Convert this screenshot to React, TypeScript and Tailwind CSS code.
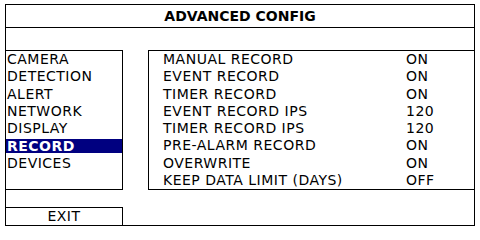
import React from 'react';

const menu = ['CAMERA', 'DETECTION', 'ALERT', 'NETWORK', 'DISPLAY', 'RECORD', 'DEVICES'];

const settings: [string, string][] = [
  ['MANUAL RECORD', 'ON'],
  ['EVENT RECORD', 'ON'],
  ['TIMER RECORD', 'ON'],
  ['EVENT RECORD IPS', '120'],
  ['TIMER RECORD IPS', '120'],
  ['PRE-ALARM RECORD', 'ON'],
  ['OVERWRITE', 'ON'],
  ['KEEP DATA LIMIT (DAYS)', 'OFF'],
];

export default function App() {
  return (
    <div className="w-[480px] h-[230px] bg-white pt-[4px] pl-[5px] text-black font-['DejaVu_Sans','Verdana',sans-serif]">
      <div className="w-[470px] h-[222px] border border-black flex flex-col">
        {/* Title */}
        <div className="h-[23px] border-b border-black flex items-center justify-center text-[14px] font-bold">
          ADVANCED CONFIG
        </div>
        <div className="h-[22px]" />

        {/* Menu + settings */}
        <div className="h-[140px] flex">
          <div className="w-[117px] border-t border-r border-b border-black text-[14px] tracking-[0.5px]">
            {menu.map((item) =>
            item === 'RECORD' ?
            <div key={item} className="h-[17.25px] py-[1.6px]">
                  <div className="h-[14px] leading-[14px] bg-[#000080] text-white font-bold pl-px">{item}</div>
                </div> :

            <div key={item} className="h-[17.25px] leading-[17.25px] pl-px">
                  {item}
                </div>
            )}
          </div>
          <div className="w-[25px]" />
          <div className="flex-1 border-t border-l border-b border-black text-[14px] tracking-[0.5px] pl-[14px]">
            {settings.map(([label, value]) =>
            <div key={label} className="h-[17.25px] leading-[17.25px] flex">
                <span className="w-[243px]">{label}</span>
                <span>{value}</span>
              </div>
            )}
          </div>
        </div>

        <div className="h-[17px]" />

        {/* Exit */}
        <div className="h-[18px] w-[117px] border-t border-r border-black text-[14px] tracking-[0.5px] leading-[17px] text-center">
          EXIT
        </div>
      </div>
    </div>);

}
